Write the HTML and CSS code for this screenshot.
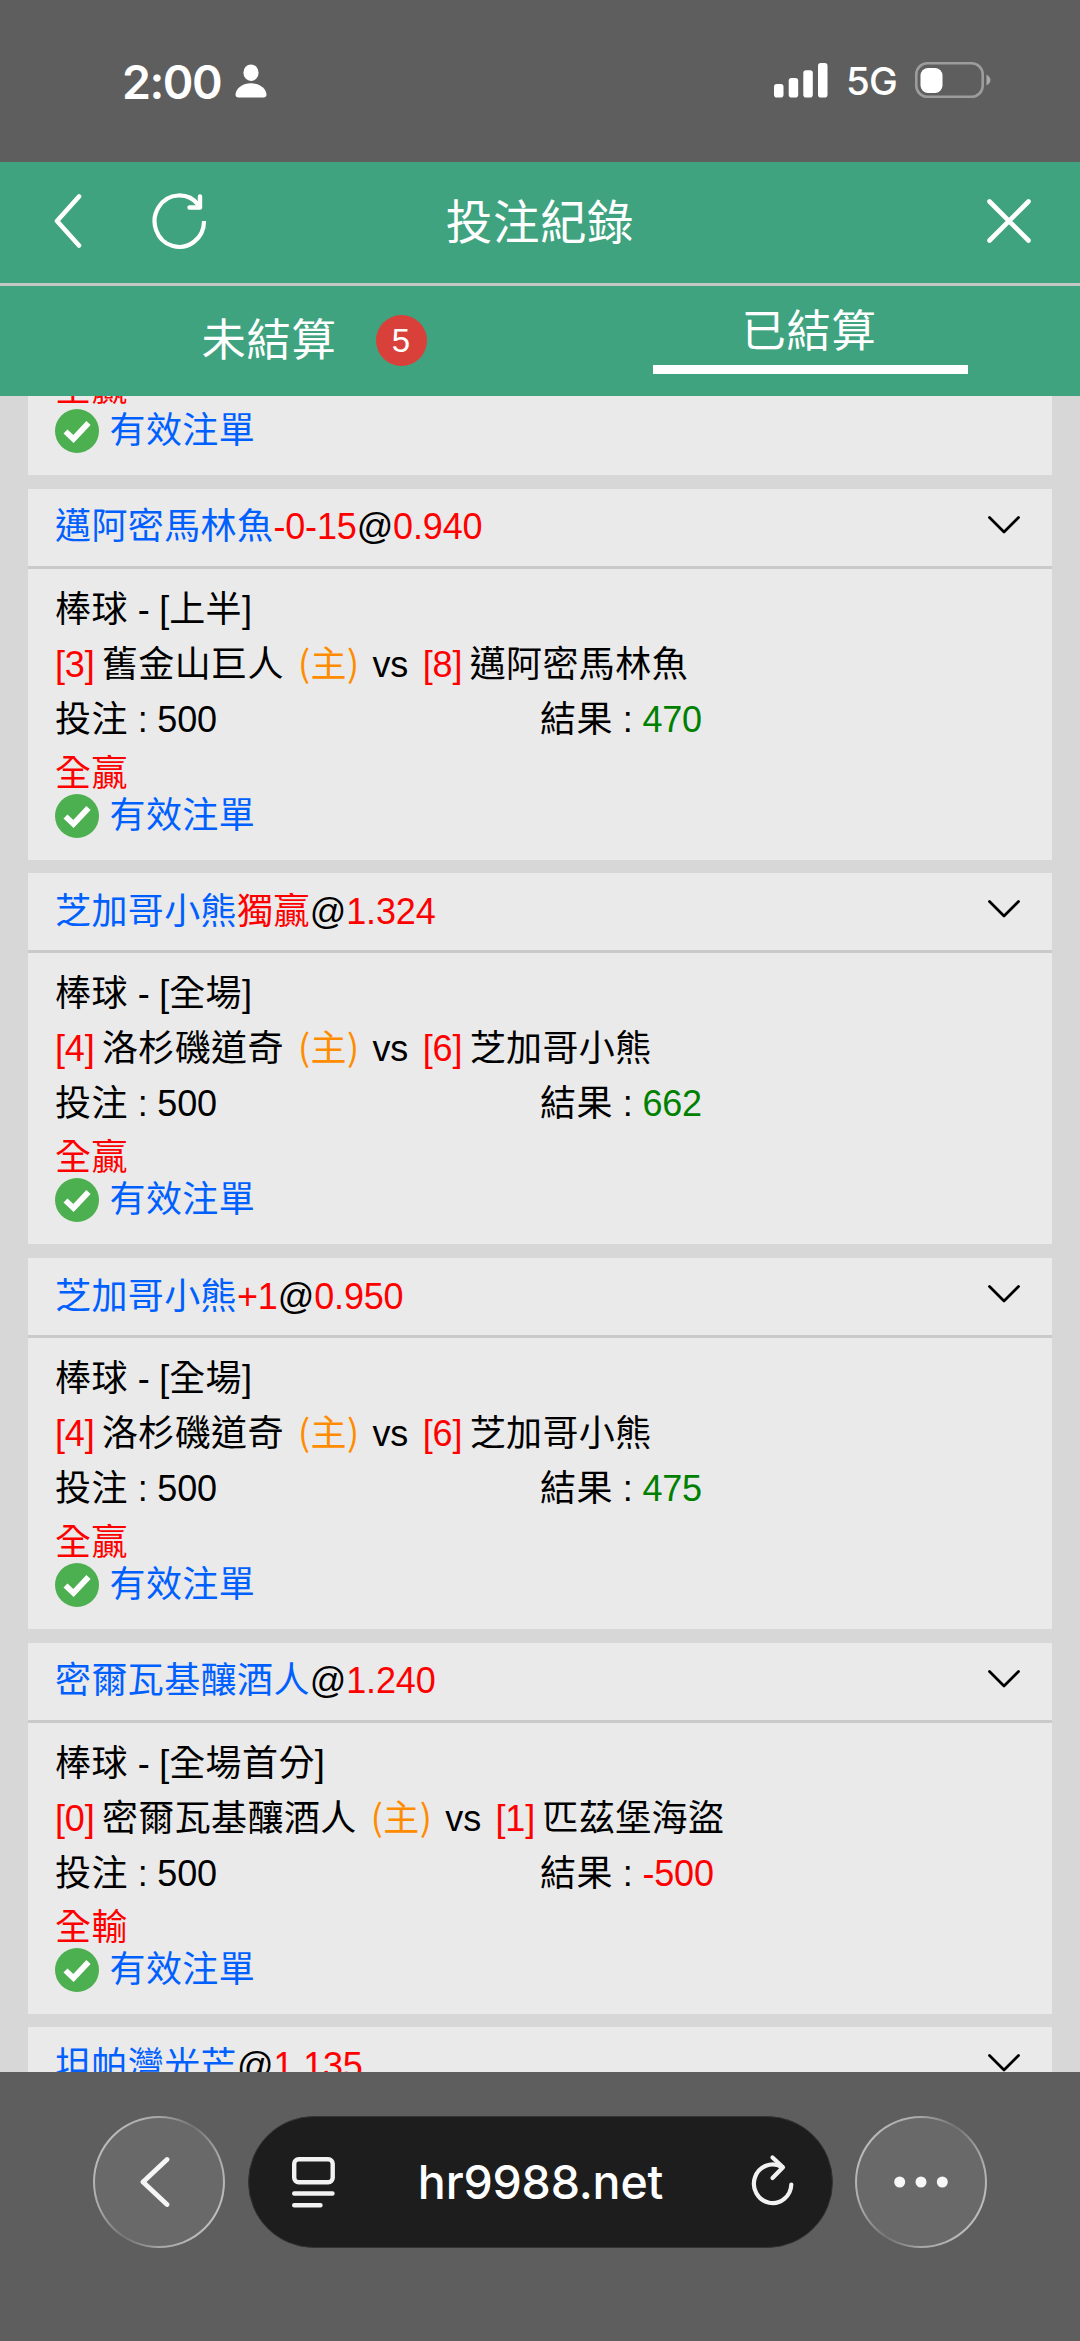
FILE: index.html
```html
<!DOCTYPE html>
<html lang="zh-Hant">
<head>
<meta charset="utf-8">
<title>投注紀錄</title>
<link rel="stylesheet" href="styles.css">
</head>
<body>
<svg class="defs" width="0" height="0">
  <symbol id="chevron" viewBox="0 0 34 20"><path d="M2.500 2.500L17 17L31.500 2.500" fill="none" stroke="#000" stroke-width="2.800" stroke-linecap="round" stroke-linejoin="round"/></symbol>
  <symbol id="check" viewBox="0 0 44 44"><circle cx="22" cy="22" r="22" fill="#4caf50"/><path d="M10.500 22.500L18.500 30L33.500 14" fill="none" stroke="#fff" stroke-width="5.800"/></symbol>
</svg>
<div class="screen">
  <div class="status">
    <span class="time">2:00</span>
    <svg class="person" width="32" height="34" viewBox="0 0 32 34"><ellipse cx="16" cy="8.700" rx="7.600" ry="8.300" fill="#fff"/><path d="M.5 30.500C1 24 8 19.300 16 19.300S31 24 31.500 30.500Q31.500 33.500 28.500 33.500H3.500Q.5 33.500 .5 30.500Z" fill="#fff"/></svg>
    <svg class="signal" width="54" height="35" viewBox="0 0 54 35"><g fill="#fff"><rect x="0" y="21" width="9.500" height="13.500" rx="2.800"/><rect x="14.700" y="15" width="9.500" height="19.500" rx="2.800"/><rect x="29.300" y="7.300" width="9.500" height="27.200" rx="2.800"/><rect x="44" y="0" width="9.500" height="34.500" rx="2.800"/></g></svg>
    <span class="net">5G</span>
    <svg class="battery" width="76" height="36" viewBox="0 0 76 36"><rect x="1.300" y="1.300" width="66.400" height="33.400" rx="11" fill="none" stroke="#9c9c9c" stroke-width="2.600"/><rect x="5.500" y="6" width="22" height="25" rx="7.500" fill="#fff"/><path d="M71.500 12.500Q75.500 15 75.500 18T71.500 23.500Z" fill="#a8a8a8"/></svg>
  </div>

  <header class="header">
    <div class="side left">
      <svg width="28" height="54" viewBox="0 0 28 54"><path d="M25 2.500L3 27L25 51.500" fill="none" stroke="#fff" stroke-width="4.600" stroke-linecap="round" stroke-linejoin="round"/></svg>
      <svg width="56" height="58" viewBox="0 0 56 58"><path d="M52 29A24.700 25.700 0 1 1 46.500 13" fill="none" stroke="#fff" stroke-width="4.200"/><path d="M37.500 15.500H48V4.500" fill="none" stroke="#fff" stroke-width="4.400" stroke-linecap="round" stroke-linejoin="round"/></svg>
    </div>
    <h1 class="title">投注紀錄</h1>
    <div class="side right">
      <svg width="44" height="44" viewBox="0 0 44 44"><path d="M2.500 2.500L41.500 41.500M41.500 2.500L2.500 41.500" fill="none" stroke="#fff" stroke-width="4.600" stroke-linecap="round"/></svg>
    </div>
  </header>

  <nav class="tabs">
    <div class="tab pending"><span>未結算</span><b class="count">5</b></div>
    <div class="tab"><span class="current">已結算</span></div>
  </nav>

  <main class="list">
    <div class="stack">
      <article class="card">
        <div class="body last-seen">
          <div class="outcome">全贏</div>
          <div class="valid"><svg width="44" height="44"><use href="#check"/></svg>有效注單</div>
        </div>
      </article>

      <article class="card">
        <div class="head"><span><span class="blue">邁阿密馬林魚</span><span class="num red">-0-15</span><span class="num">@</span><span class="num red">0.940</span></span><svg width="34" height="20"><use href="#chevron"/></svg></div>
        <div class="body">
          <div class="row">棒球<span class="num"> - [</span>上半<span class="num">]</span></div>
          <div class="row"><span class="num red score">[3] </span>舊金山巨人<span class="home">(主)</span><span class="num">vs</span><span class="num red score away">[8] </span>邁阿密馬林魚</div>
          <div class="row money"><div>投注<span class="num"> : 500</span></div><div>結果<span class="num"> : <span class="green">470</span></span></div></div>
          <div class="outcome">全贏</div>
          <div class="valid"><svg width="44" height="44"><use href="#check"/></svg>有效注單</div>
        </div>
      </article>

      <article class="card">
        <div class="head"><span><span class="blue">芝加哥小熊</span><span class="red">獨贏</span><span class="num">@</span><span class="num red">1.324</span></span><svg width="34" height="20"><use href="#chevron"/></svg></div>
        <div class="body">
          <div class="row">棒球<span class="num"> - [</span>全場<span class="num">]</span></div>
          <div class="row"><span class="num red score">[4] </span>洛杉磯道奇<span class="home">(主)</span><span class="num">vs</span><span class="num red score away">[6] </span>芝加哥小熊</div>
          <div class="row money"><div>投注<span class="num"> : 500</span></div><div>結果<span class="num"> : <span class="green">662</span></span></div></div>
          <div class="outcome">全贏</div>
          <div class="valid"><svg width="44" height="44"><use href="#check"/></svg>有效注單</div>
        </div>
      </article>

      <article class="card">
        <div class="head"><span><span class="blue">芝加哥小熊</span><span class="num red">+1</span><span class="num">@</span><span class="num red">0.950</span></span><svg width="34" height="20"><use href="#chevron"/></svg></div>
        <div class="body">
          <div class="row">棒球<span class="num"> - [</span>全場<span class="num">]</span></div>
          <div class="row"><span class="num red score">[4] </span>洛杉磯道奇<span class="home">(主)</span><span class="num">vs</span><span class="num red score away">[6] </span>芝加哥小熊</div>
          <div class="row money"><div>投注<span class="num"> : 500</span></div><div>結果<span class="num"> : <span class="green">475</span></span></div></div>
          <div class="outcome">全贏</div>
          <div class="valid"><svg width="44" height="44"><use href="#check"/></svg>有效注單</div>
        </div>
      </article>

      <article class="card">
        <div class="head"><span><span class="blue">密爾瓦基釀酒人</span><span class="num">@</span><span class="num red">1.240</span></span><svg width="34" height="20"><use href="#chevron"/></svg></div>
        <div class="body">
          <div class="row">棒球<span class="num"> - [</span>全場首分<span class="num">]</span></div>
          <div class="row"><span class="num red score">[0] </span>密爾瓦基釀酒人<span class="home">(主)</span><span class="num">vs</span><span class="num red score away">[1] </span>匹茲堡海盜</div>
          <div class="row money"><div>投注<span class="num"> : 500</span></div><div>結果<span class="num"> : <span class="red">-500</span></span></div></div>
          <div class="outcome">全輸</div>
          <div class="valid"><svg width="44" height="44"><use href="#check"/></svg>有效注單</div>
        </div>
      </article>

      <article class="card">
        <div class="head"><span><span class="blue">坦帕灣光芒</span><span class="num">@</span><span class="num red">1.135</span></span><svg width="34" height="20"><use href="#chevron"/></svg></div>
      </article>
    </div>
  </main>

  <footer class="browser">
    <div class="round"><svg width="30" height="52" viewBox="0 0 30 52"><path d="M27 3.500L3 26L27 48.500" fill="none" stroke="#f5f5f5" stroke-width="4.800" stroke-linecap="round" stroke-linejoin="round"/></svg></div>
    <div class="address">
      <svg class="page-icon" width="44" height="52" viewBox="0 0 44 52"><rect x="2.200" y="2.200" width="38.500" height="23" rx="4.500" fill="none" stroke="#f2f2f2" stroke-width="4.400"/><path d="M2.200 36.500H40.500M2.200 48.200H28.500" stroke="#f2f2f2" stroke-width="4.400" stroke-linecap="round"/></svg>
      <span class="url">hr9988.net</span>
      <svg class="reload" width="44" height="54" viewBox="0 0 44 54"><path d="M40.300 30.500A18.700 19.300 0 1 1 30.500 12.800" fill="none" stroke="#f2f2f2" stroke-width="4.200" stroke-linecap="round"/><path d="M21.500 3.500L32 13.300L21.500 24" fill="none" stroke="#f2f2f2" stroke-width="4.200" stroke-linecap="round" stroke-linejoin="round"/></svg>
    </div>
    <div class="round"><svg width="54" height="12" viewBox="0 0 54 12"><g fill="#f7f7f7"><circle cx="5.700" cy="6" r="5.500"/><circle cx="27" cy="6" r="5.500"/><circle cx="48.300" cy="6" r="5.500"/></g></svg></div>
  </footer>
</div>
</body>
</html>
```
FILE: styles.css
```css
* { box-sizing: border-box; }

body {
  margin: 0;
  font-family: "Liberation Sans", "Noto Sans CJK TC", sans-serif;
  font-size: 36px;
  color: #000;
}

svg { display: block; flex: none; }
.defs { position: absolute; }

.screen {
  display: flex;
  flex-direction: column;
  width: 1080px;
  height: 2341px;
  overflow: hidden;
  background: #d7d7d7;
}

/* status bar */
.status {
  display: flex;
  align-items: center;
  flex: none;
  height: 162px;
  padding: 0 89px 2px 122px;
  background: #5e5e5e;
  color: #fff;
  font-family: Inter, sans-serif;
}
.time { width: 113px; padding-top: 3px; font-size: 46.500px; font-weight: 600; letter-spacing: -1.500px; }
.person { margin-top: 1px; }
.signal { margin: 1px 0 0 auto; }
.net { width: 68px; margin: 2px 0 0 18px; font-size: 38.500px; font-weight: 500; letter-spacing: -.8px; }
.battery { margin-left: 1px; }

/* page header */
.header {
  display: flex;
  align-items: center;
  flex: none;
  height: 124px;
  padding: 0 49.500px 4px 53.500px;
  border-bottom: 3px solid #c4c8c6;
  background: #40a380;
  color: #fff;
}
.side { display: flex; align-items: center; width: 180px; gap: 70px; }
.left { width: 176px; }
.right { justify-content: flex-end; }
.title {
  flex: 1;
  margin: 0;
  padding-top: 4px;
  text-align: center;
  font-size: 46.500px;
  line-height: 60px;
  font-weight: 400;
  letter-spacing: .6px;
}

.tabs { display: flex; flex: none; height: 109.600px; background: #40a380; color: #fff; }
.tab {
  display: flex;
  justify-content: center;
  width: 50%;
  font-size: 44.300px;
  line-height: 60px;
  letter-spacing: .7px;
}
.pending { justify-content: flex-start; padding: 25px 0 0 201.500px; }
.count {
  width: 51px;
  height: 51px;
  margin: 4px 0 0 39px;
  border-radius: 50%;
  background: #d9403a;
  font-size: 33px;
  line-height: 51px;
  font-weight: 400;
  letter-spacing: 0;
  text-align: center;
}
.current { width: 315px; height: 88px; padding: 16px 2px 0 0; border-bottom: 9px solid #fff; text-align: center; }

/* bet list */
.list { flex: none; height: 1676px; overflow: hidden; }
.stack { display: flex; flex-direction: column; gap: 13.800px; margin-top: -211.600px; padding: 0 27.600px; }
.card { flex: none; background: #eaeaea; letter-spacing: .4px; }
.head {
  display: flex;
  align-items: center;
  justify-content: space-between;
  height: 80px;
  padding: 0 31.500px 5px 27.400px;
  border-bottom: 3px solid #cacaca;
  line-height: 72px;
}
.head > span { padding-top: 5px; }
.body { height: 290.900px; padding: 13px 27.400px 0; }
.last-seen { padding-top: 178px; }
.row { height: 55px; line-height: 55px; white-space: pre; }
.money { display: grid; grid-template-columns: 1fr 1fr; }
.outcome { height: 47px; padding-top: 5px; line-height: 43px; color: #f00; }
.valid { display: flex; align-items: center; gap: 10.500px; height: 44px; line-height: 42px; color: #0060ff; }

.num { letter-spacing: -.15px; }
.score { word-spacing: -2.500px; }
.home { margin: 0 13px 0 14px; font-family: "Noto Sans CJK TC", sans-serif; line-height: 1; color: #ff8c00; }
.away { margin-left: 14.500px; }
.blue { color: #0060ff; }
.red { color: #f00; }
.green { color: #008000; }

/* browser toolbar */
.browser {
  display: flex;
  align-items: flex-start;
  flex: 1;
  gap: 22.500px;
  padding: 44px 93px 0 93px;
  background: #5e5e5e;
}
.round {
  display: flex;
  align-items: center;
  justify-content: center;
  flex: none;
  width: 132px;
  height: 132px;
  border: 2px solid transparent;
  border-radius: 50%;
  background:
    linear-gradient(#696969, #696969) padding-box,
    linear-gradient(122deg, #bdbdbd 12%, #a8a8a8 30%, #747474 50%, #a8a8a8 70%, #c0c0c0 88%) border-box;
}
.round svg { margin-right: 8px; }
.round:last-child svg { margin-right: 1px; }
.address {
  display: flex;
  align-items: center;
  justify-content: space-between;
  flex: 1;
  height: 132px;
  padding: 0 36px 0 43px;
  border: 1.500px solid #333;
  border-radius: 66px;
  background: #1d1d1d;
  color: #fff;
}
.page-icon { margin-top: 2px; }
.reload { margin-bottom: 2px; }
.url { margin-right: 6px; font-family: Inter, sans-serif; font-size: 46.500px; font-weight: 500; letter-spacing: -.2px; }
```
